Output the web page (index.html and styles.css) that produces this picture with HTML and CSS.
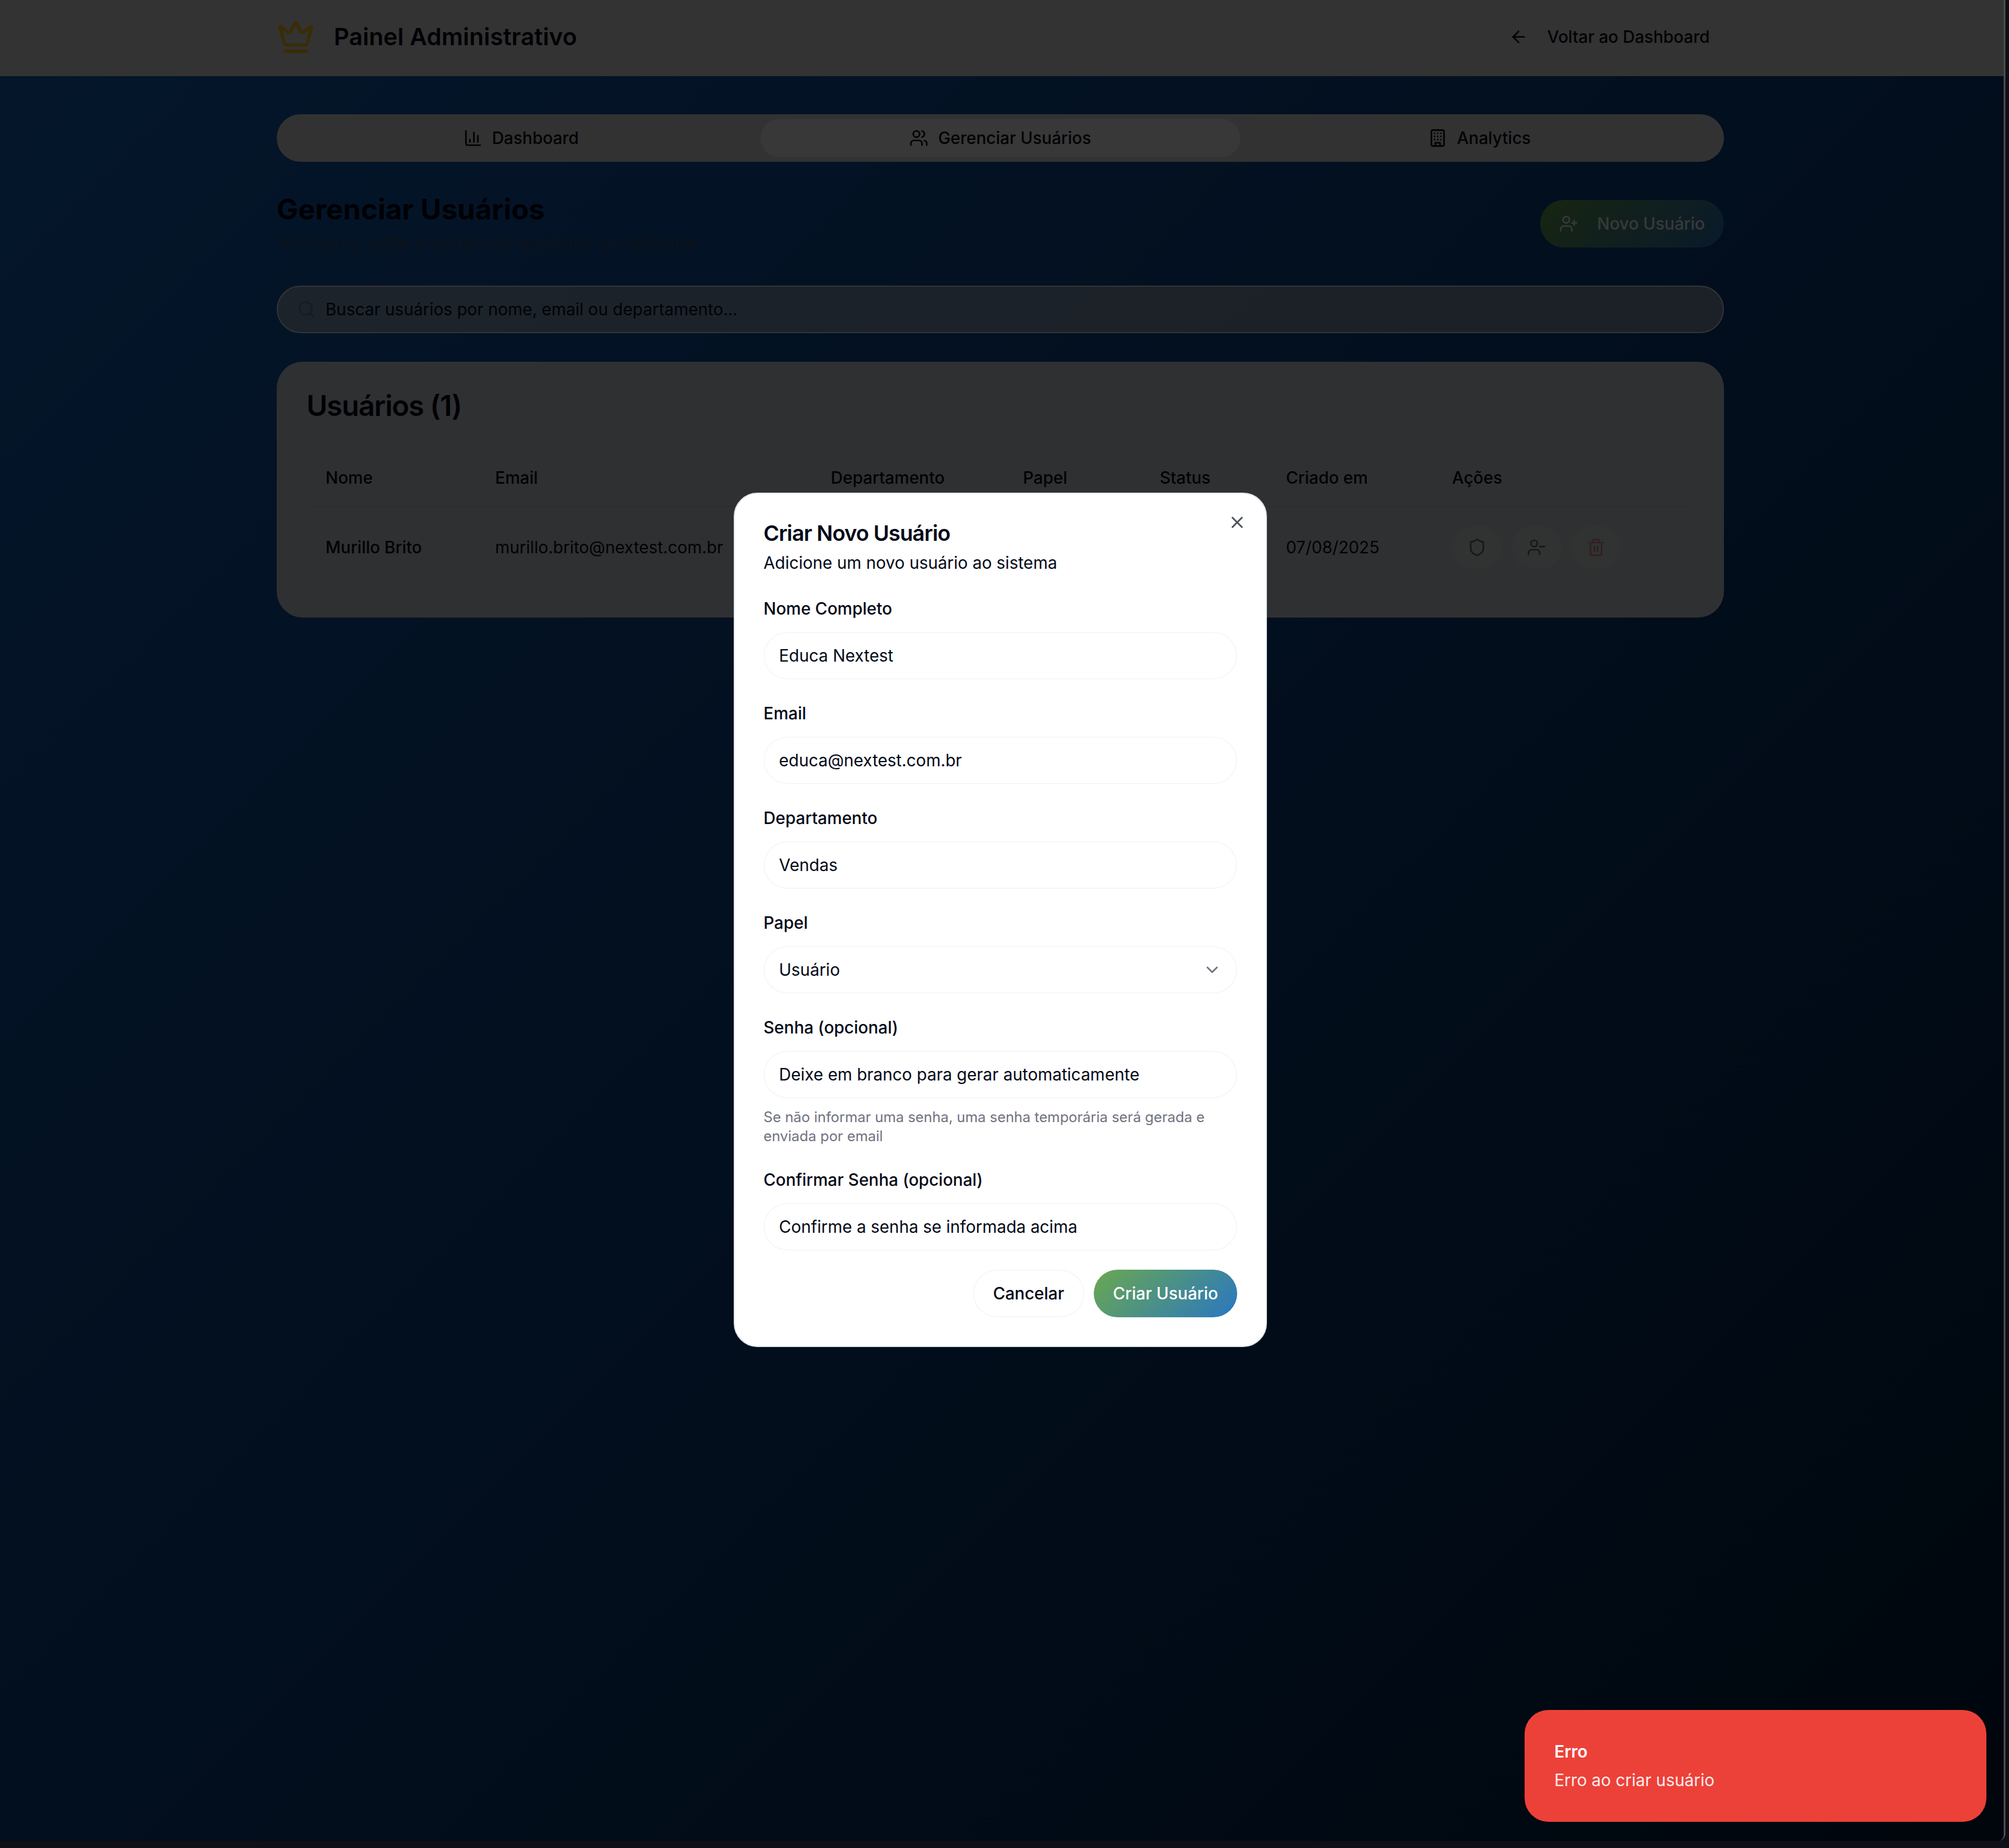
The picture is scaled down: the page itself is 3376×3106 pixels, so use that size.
FILE: index.html
```html
<!DOCTYPE html>
<html lang="pt-BR">
<head>
  <meta charset="UTF-8" />
  <title>Painel Administrativo</title>
  <link rel="stylesheet" href="styles.css">
</head>
<body>
  <div class="window">
    <div class="page">
      <header class="topbar">
        <div class="topbar-inner">
          <div class="brand">
            <svg class="icon-crown" viewBox="0 0 24 24"><path d="M11.562 3.266a.5.5 0 0 1 .876 0L15.39 8.87a1 1 0 0 0 1.516.294L21.183 5.5a.5.5 0 0 1 .798.519l-2.834 10.246a1 1 0 0 1-.956.734H5.81a1 1 0 0 1-.957-.734L2.02 6.02a.5.5 0 0 1 .798-.519l4.276 3.664a1 1 0 0 0 1.516-.294z"/><path d="M5 21h14"/></svg>
            <h1>Painel Administrativo</h1>
          </div>
          <a class="back-link">
            <svg class="icon" viewBox="0 0 24 24"><path d="m12 19-7-7 7-7"/><path d="M19 12H5"/></svg>
            Voltar ao Dashboard
          </a>
        </div>
      </header>

      <main class="content">
        <div class="tabs">
          <div class="tab">
            <svg class="icon" viewBox="0 0 24 24"><path d="M3 3v16a2 2 0 0 0 2 2h16"/><path d="M18 17V9"/><path d="M13 17V5"/><path d="M8 17v-3"/></svg>
            Dashboard
          </div>
          <div class="tab active">
            <svg class="icon" viewBox="0 0 24 24"><path d="M16 21v-2a4 4 0 0 0-4-4H6a4 4 0 0 0-4 4v2"/><circle cx="9" cy="7" r="4"/><path d="M22 21v-2a4 4 0 0 0-3-3.87"/><path d="M16 3.13a4 4 0 0 1 0 7.75"/></svg>
            Gerenciar Usuários
          </div>
          <div class="tab">
            <svg class="icon" viewBox="0 0 24 24"><rect x="4" y="2" width="16" height="20" rx="2"/><path d="M9 22v-4h6v4"/><path d="M8 6h.01"/><path d="M16 6h.01"/><path d="M12 6h.01"/><path d="M12 10h.01"/><path d="M12 14h.01"/><path d="M16 10h.01"/><path d="M16 14h.01"/><path d="M8 10h.01"/><path d="M8 14h.01"/></svg>
            Analytics
          </div>
        </div>

        <div class="section-head">
          <div>
            <h2>Gerenciar Usuários</h2>
            <p>Adicione, edite e gerencie usuários do sistema</p>
          </div>
          <button class="btn-new">
            <svg class="icon" viewBox="0 0 24 24"><path d="M16 21v-2a4 4 0 0 0-4-4H6a4 4 0 0 0-4 4v2"/><circle cx="9" cy="7" r="4"/><line x1="19" x2="19" y1="8" y2="14"/><line x1="22" x2="16" y1="11" y2="11"/></svg>
            Novo Usuário
          </button>
        </div>

        <div class="search">
          <svg class="icon search-icon" viewBox="0 0 24 24"><circle cx="11" cy="11" r="8"/><path d="m21 21-4.3-4.3"/></svg>
          <span>Buscar usuários por nome, email ou departamento...</span>
        </div>

        <section class="card">
          <h3>Usuários (1)</h3>
          <div class="table-row table-head">
            <span>Nome</span><span>Email</span><span>Departamento</span><span>Papel</span><span>Status</span><span>Criado em</span><span>Ações</span>
          </div>
          <div class="table-row table-body">
            <span class="strong">Murillo Brito</span>
            <span>murillo.brito@nextest.com.br</span>
            <span></span><span></span><span></span>
            <span>07/08/2025</span>
            <div class="actions">
              <button class="act"><svg class="icon" viewBox="0 0 24 24"><path d="M20 13c0 5-3.5 7.5-7.66 8.95a1 1 0 0 1-.67-.01C7.5 20.5 4 18 4 13V6a1 1 0 0 1 1-1c2 0 4.5-1.2 6.24-2.72a1.17 1.17 0 0 1 1.52 0C14.51 3.81 17 5 19 5a1 1 0 0 1 1 1z"/></svg></button>
              <button class="act"><svg class="icon" viewBox="0 0 24 24"><path d="M16 21v-2a4 4 0 0 0-4-4H6a4 4 0 0 0-4 4v2"/><circle cx="9" cy="7" r="4"/><line x1="22" x2="16" y1="11" y2="11"/></svg></button>
              <button class="act danger"><svg class="icon" viewBox="0 0 24 24"><path d="M3 6h18"/><path d="M19 6v14c0 1-1 2-2 2H7c-1 0-2-1-2-2V6"/><path d="M8 6V4c0-1 1-2 2-2h4c1 0 2 1 2 2v2"/><line x1="10" x2="10" y1="11" y2="17"/><line x1="14" x2="14" y1="11" y2="17"/></svg></button>
            </div>
          </div>
        </section>
      </main>

      <div class="overlay"></div>

      <div class="dialog">
        <svg class="dialog-close" viewBox="0 0 24 24"><path d="M18 6 6 18"/><path d="m6 6 12 12"/></svg>
        <div class="dialog-head">
          <h4>Criar Novo Usuário</h4>
          <p>Adicione um novo usuário ao sistema</p>
        </div>
        <div class="field">
          <label>Nome Completo</label>
          <div class="input">Educa Nextest</div>
        </div>
        <div class="field">
          <label>Email</label>
          <div class="input">educa@nextest.com.br</div>
        </div>
        <div class="field">
          <label>Departamento</label>
          <div class="input">Vendas</div>
        </div>
        <div class="field">
          <label>Papel</label>
          <div class="input select">
            Usuário
            <svg class="icon chevron" viewBox="0 0 24 24"><path d="m6 9 6 6 6-6"/></svg>
          </div>
        </div>
        <div class="field">
          <label>Senha (opcional)</label>
          <div class="input">Deixe em branco para gerar automaticamente</div>
          <small>Se não informar uma senha, uma senha temporária será gerada e enviada por email</small>
        </div>
        <div class="field">
          <label>Confirmar Senha (opcional)</label>
          <div class="input">Confirme a senha se informada acima</div>
        </div>
        <div class="dialog-actions">
          <button class="btn-cancel">Cancelar</button>
          <button class="btn-create">Criar Usuário</button>
        </div>
      </div>

      <div class="toast">
        <strong>Erro</strong>
        <span>Erro ao criar usuário</span>
      </div>
    </div>
  </div>
</body>
</html>
```

FILE: styles.css
```css
* {
  margin: 0;
  padding: 0;
  box-sizing: border-box;
}

html, body {
  width: 100%;
  height: 100%;
  overflow: hidden;
  background: #0f0f17;
  font-family: "Inter", "Liberation Sans", sans-serif;
  font-size: 28px;
  line-height: 40px;
  color: #020817;
}

.window {
  width: 3370px;
  height: 3094px;
  border-right: 3px solid #4c4c4e;
  border-radius: 0 0 12px 0;
  overflow: hidden;
  background: #020817;
}

.page {
  position: relative;
  width: 100%;
  height: 100%;
  background: linear-gradient(135deg, #1868c8 0%, #1054a4 25%, #0c4488 50%, #083468 75%, #001a34 100%);
}

.icon {
  width: 32px;
  height: 32px;
  flex: none;
  fill: none;
  stroke: currentColor;
  stroke-width: 2;
  stroke-linecap: round;
  stroke-linejoin: round;
}

/* top bar */
.topbar {
  height: 128px;
  background: #e9e9e9;
}

.topbar-inner {
  width: 2432px;
  height: 100%;
  margin-left: 465px;
  padding-bottom: 4px;
  display: flex;
  align-items: center;
  justify-content: space-between;
}

.brand {
  display: flex;
  align-items: center;
  gap: 32px;
}

.brand h1 {
  font-size: 40px;
  line-height: 56px;
  font-weight: 600;
}

.icon-crown {
  width: 64px;
  height: 64px;
  fill: none;
  stroke: #ffcc10;
  stroke-width: 2;
  stroke-linecap: round;
  stroke-linejoin: round;
}

.back-link {
  display: flex;
  align-items: center;
  gap: 32px;
  padding: 0 24px;
  font-weight: 500;
  color: #020817;
}

/* main column */
.content {
  width: 2432px;
  margin-left: 465px;
  padding-top: 64px;
}

.tabs {
  display: grid;
  grid-template-columns: repeat(3, 1fr);
  height: 80px;
  padding: 8px;
  border-radius: 40px;
  background: #e3e3e3;
}

.tab {
  display: flex;
  align-items: center;
  justify-content: center;
  gap: 16px;
  border-radius: 32px;
  font-weight: 500;
}

.tab.active {
  background: #fff;
}

.section-head {
  display: flex;
  align-items: center;
  justify-content: space-between;
  margin-top: 48px;
}

.section-head h2 {
  font-size: 48px;
  line-height: 64px;
  font-weight: 700;
}

.section-head p {
  font-size: 32px;
  line-height: 48px;
  color: #37526d;
}

.btn-new {
  display: flex;
  align-items: center;
  gap: 32px;
  height: 80px;
  padding: 0 32px;
  border: 0;
  border-radius: 40px;
  background: linear-gradient(135deg, #6aa84f, #2a77c2);
  color: #fff;
  font: inherit;
  font-weight: 500;
}

.search {
  display: flex;
  align-items: center;
  gap: 16px;
  height: 80px;
  margin-top: 48px;
  padding: 0 32px;
  border: 2px solid #e2e8f0;
  border-radius: 40px;
  background: rgba(202, 205, 206, 0.6);
  color: #020817;
}

.search-icon {
  color: #6d7f91;
}

.card {
  height: 430px;
  margin-top: 48px;
  padding: 50px;
  border-radius: 44px;
  background: #d6dae3;
}

.card h3 {
  font-size: 48px;
  line-height: 48px;
  font-weight: 600;
  letter-spacing: -1.2px;
  margin-bottom: 50px;
}

.table-row {
  display: grid;
  grid-template-columns: 285px 564px 323px 230px 212px 279px 1fr;
  align-items: center;
  padding-left: 32px;
}

.table-row > span {
  padding-right: 16px;
}

.table-head {
  height: 96px;
  font-weight: 500;
  border-bottom: 2px solid rgba(0, 0, 0, 0.04);
}

.table-body {
  height: 136px;
}

.strong {
  font-weight: 500;
}

.actions {
  display: flex;
  gap: 16px;
}

.act {
  display: flex;
  align-items: center;
  justify-content: center;
  width: 84px;
  height: 72px;
  border: 0;
  border-radius: 36px;
  background: #e8eae8;
  color: #020817;
  opacity: 0.5;
}

.act.danger {
  color: #ef4444;
}

/* modal */
.overlay {
  position: absolute;
  inset: 0;
  background: rgba(0, 0, 0, 0.78);
}

.dialog {
  position: absolute;
  top: 828px;
  left: 1233px;
  width: 896px;
  padding: 48px;
  border: 2px solid #e2e8f0;
  border-radius: 40px;
  background: #fff;
  display: flex;
  flex-direction: column;
  gap: 40px;
}

.dialog-close {
  position: absolute;
  top: 32px;
  right: 32px;
  width: 32px;
  height: 32px;
  fill: none;
  stroke: #4a4f57;
  stroke-width: 2;
  stroke-linecap: round;
  stroke-linejoin: round;
}

.dialog-head h4 {
  font-size: 36px;
  line-height: 36px;
  font-weight: 600;
  letter-spacing: -0.9px;
}

.dialog-head p {
  margin-top: 12px;
}

.field {
  display: flex;
  flex-direction: column;
}

.field label {
  font-weight: 500;
  line-height: 34px;
  margin-bottom: 22px;
}

.input {
  display: flex;
  align-items: center;
  justify-content: space-between;
  height: 80px;
  padding: 0 24px;
  border: 2px solid #f6f7f8;
  border-radius: 40px;
  background: #fff;
}

.chevron {
  color: #6f7480;
}

.field small {
  margin-top: 16px;
  font-size: 24px;
  line-height: 32px;
  color: #6f7280;
}

.dialog-actions {
  display: flex;
  justify-content: flex-end;
  gap: 16px;
  margin-top: -8px;
}

.btn-cancel,
.btn-create {
  height: 80px;
  padding: 0 32px;
  border-radius: 40px;
  font: inherit;
  font-weight: 500;
}

.btn-cancel {
  border: 2px solid #f6f7f8;
  background: #fff;
  color: #020817;
}

.btn-create {
  border: 0;
  background: linear-gradient(135deg, #6aa84f, #2a77c2);
  color: #fff;
}

/* toast */
.toast {
  position: absolute;
  right: 29px;
  bottom: 32px;
  width: 776px;
  height: 188px;
  padding: 50px;
  border-radius: 40px;
  background: #ec4139;
  color: #fff;
  display: flex;
  flex-direction: column;
  gap: 8px;
}

.toast strong {
  font-weight: 600;
}

.toast span {
  opacity: 0.9;
}
```
